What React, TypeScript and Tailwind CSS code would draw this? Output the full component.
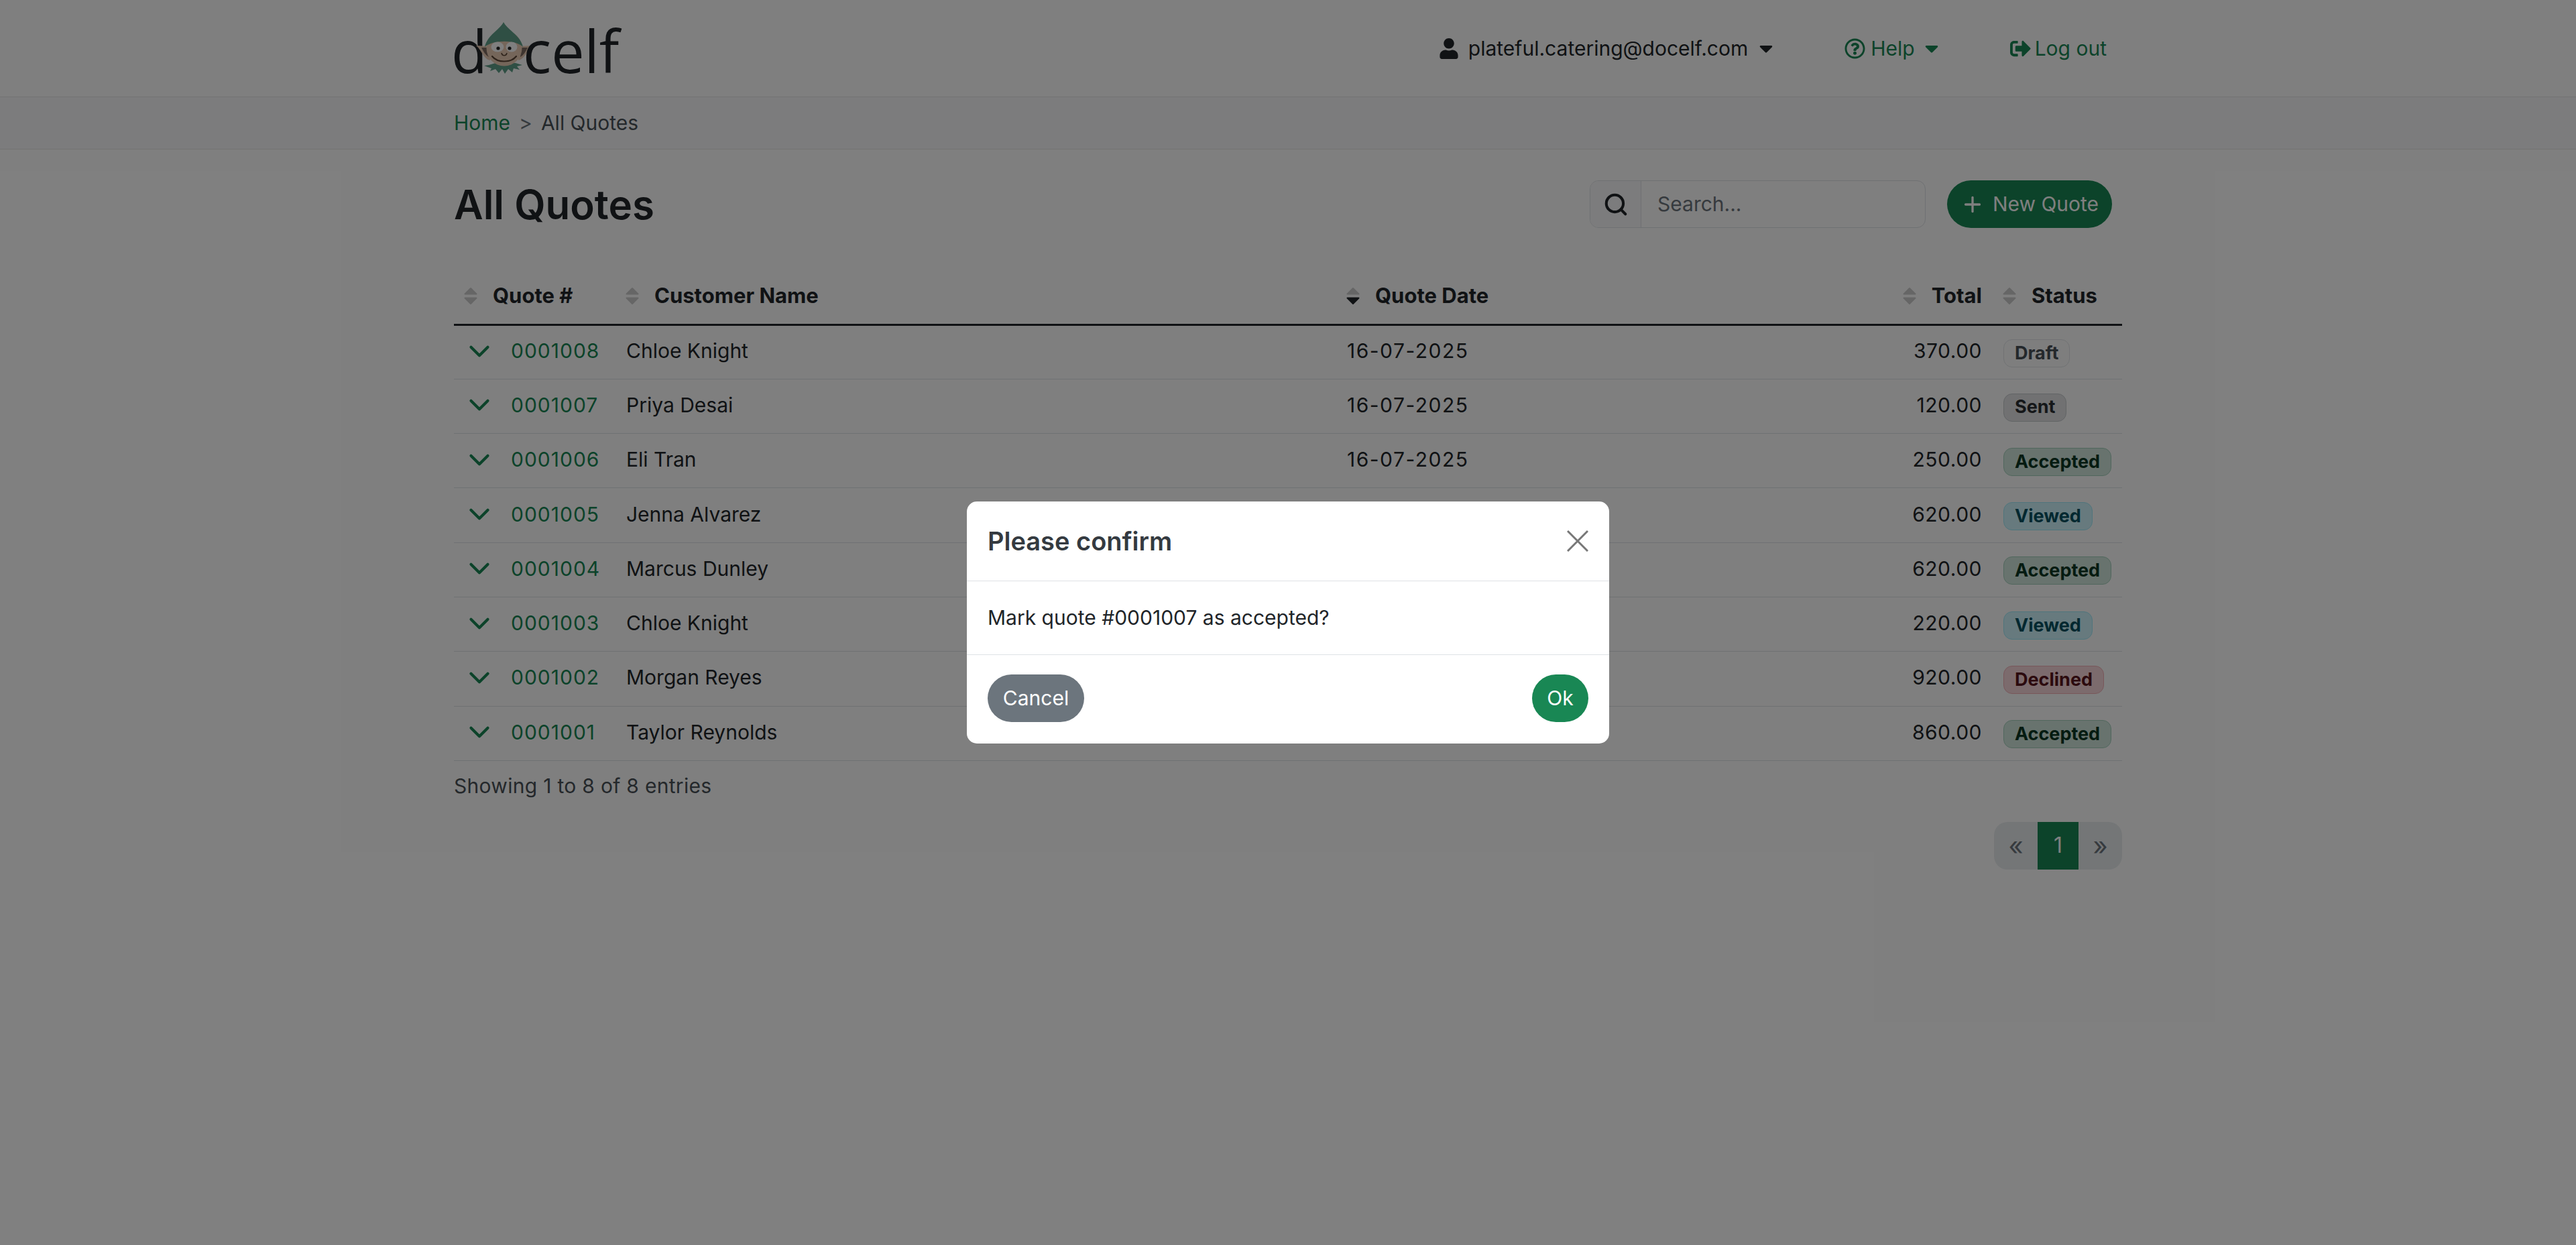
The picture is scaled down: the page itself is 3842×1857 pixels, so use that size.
import { ChevronDown, Plus, Search } from 'lucide-react'
import { FaCaretDown, FaRegQuestionCircle, FaSignOutAlt, FaUser } from 'react-icons/fa'

type Status = 'Draft' | 'Sent' | 'Accepted' | 'Viewed' | 'Declined'

const quotes: { id: string; name: string; total: string; status: Status }[] = [
  { id: '0001008', name: 'Chloe Knight', total: '370.00', status: 'Draft' },
  { id: '0001007', name: 'Priya Desai', total: '120.00', status: 'Sent' },
  { id: '0001006', name: 'Eli Tran', total: '250.00', status: 'Accepted' },
  { id: '0001005', name: 'Jenna Alvarez', total: '620.00', status: 'Viewed' },
  { id: '0001004', name: 'Marcus Dunley', total: '620.00', status: 'Accepted' },
  { id: '0001003', name: 'Chloe Knight', total: '220.00', status: 'Viewed' },
  { id: '0001002', name: 'Morgan Reyes', total: '920.00', status: 'Declined' },
  { id: '0001001', name: 'Taylor Reynolds', total: '860.00', status: 'Accepted' }
]

const statusTone: Record<Status, string> = {
  Draft: 'border-[#e2e5e8] bg-[#fcfcfd] text-[#495057]',
  Sent: 'border-[#c4c8cb] bg-[#e2e3e5] text-[#2b2f32]',
  Accepted: 'border-[#a3cfbb] bg-[#d1e7dd] text-[#0a3622]',
  Viewed: 'border-[#9eeaf9] bg-[#cff4fc] text-[#055160]',
  Declined: 'border-[#f1aeb5] bg-[#f8d7da] text-[#58151c]'
}

function ElfHead() {
  return (
    <svg viewBox="0 0 87 78" className="h-[78px] w-[87px] shrink-0" aria-hidden>
      <path d="M20 65 L13 66 L24 70 L22 74 L30 71 L35 77 L40 71 L44 78 L49 71 L55 76 L57 70 L66 72 L62 67 L70 65 L60 62 L30 62Z" fill="#5e9e88" />
      <path d="M1 36 L20 37 L22 58 C12 56 9 42 1 36Z" fill="#eaccb4" />
      <path d="M86 36 L66 37 L64 58 C74 56 78 42 86 36Z" fill="#eaccb4" />
      <path d="M9 39 L19 39 L20 53 C15 50 12 45 9 39Z" fill="#7c6a60" />
      <path d="M78 39 L68 39 L67 53 C72 50 75 45 78 39Z" fill="#7c6a60" />
      <circle cx="43" cy="40" r="26.5" fill="#eaccb4" />
      <path d="M42 1 C48 13 67 20 71 38 C60 27 26 27 14 38 C18 20 36 13 42 1Z" fill="#5e9e88" />
      <ellipse cx="33" cy="38" rx="9.5" ry="7.5" fill="#fff" />
      <ellipse cx="54" cy="38" rx="8.5" ry="7.5" fill="#fff" />
      <circle cx="34" cy="40" r="2.6" fill="#222" />
      <circle cx="51" cy="40" r="2.6" fill="#222" />
      <path d="M39 47 C40 52 46 52 47 47" fill="none" stroke="#5c4636" strokeWidth="1.6" />
      <path d="M25 52 C33 62 53 62 61 52" fill="none" stroke="#5c4636" strokeWidth="2.2" strokeLinecap="round" />
    </svg>
  )
}

function SortIcon({ active }: { active?: boolean }) {
  return (
    <svg viewBox="0 0 20 27" className="h-[27px] w-5 shrink-0" strokeLinejoin="round" strokeWidth="2" aria-hidden>
      <path d="M10 2 L18.5 10.5 L1.5 10.5Z" fill="#cccccc" stroke="#cccccc" />
      <path
        d="M10 25 L18.5 16.5 L1.5 16.5Z"
        fill={active ? '#212529' : '#cccccc'}
        stroke={active ? '#212529' : '#cccccc'}
      />
    </svg>
  )
}

function Header({ label, active, right }: { label: string; active?: boolean; right?: boolean }) {
  return (
    <div className={`flex items-center gap-[23px] ${right ? 'justify-end' : ''}`}>
      <SortIcon active={active} />
      <span className="text-[31px] font-bold">{label}</span>
    </div>
  )
}

export default function App() {
  return (
    <div className="relative min-h-[1857px] bg-white text-[30px] text-[#212529] [font-family:Inter,sans-serif]">
      <header className="h-[145px] border-b border-[#e6e6e6]">
        <div className="mx-auto flex h-full w-[2488px] items-start justify-between pr-[23px]">
          <a className="mt-[32px] flex h-[78px] items-start text-[#212529] [font-family:'Open_Sans',sans-serif]" aria-label="docelf">
            <span className="-ml-[4px] -mt-[17px] w-[36px] text-[88px] leading-[120px]">d</span>
            <ElfHead />
            <span className="-ml-[16px] -mt-[17px] text-[88px] leading-[120px]">celf</span>
          </a>
          <nav className="mt-[54px] flex items-center text-[30px] leading-[36px]">
            <FaUser className="h-[31px] w-[28px]" />
            <span className="ml-[15px]">plateful.catering@docelf.com</span>
            <FaCaretDown className="ml-[17px] h-[32px] w-[20px]" />
            <span className="ml-[107px] flex items-center text-[#198754]">
              <FaRegQuestionCircle className="h-[31px] w-[31px]" />
              <span className="ml-2">Help</span>
              <FaCaretDown className="ml-[15px] h-[32px] w-[20px]" />
            </span>
            <span className="ml-[107px] flex items-center text-[#198754]">
              <FaSignOutAlt className="h-[31px] w-[31px]" />
              <span className="ml-[6px]">Log out</span>
            </span>
          </nav>
        </div>
      </header>

      <div className="h-[78px] border-b border-[#e6e6e6] bg-[#f8f9fa]">
        <div className="mx-auto flex h-full w-[2488px] items-center text-[30px]">
          <a className="text-[#198754]">Home</a>
          <span className="mx-[13px] text-[#6c757d]">&gt;</span>
          <span className="text-[#495057]">All Quotes</span>
        </div>
      </div>

      <main className="mx-auto w-[2488px]">
        <div className="mt-[46px] flex h-[71px] items-center pr-[15px]">
          <h1 className="text-[60px] font-semibold leading-none">All Quotes</h1>
          <div className="ml-auto flex h-[71px] w-[501px] overflow-hidden rounded-[13px] border border-[#dee2e6]">
            <span className="flex w-[76px] items-center justify-center border-r border-[#dee2e6] bg-[#f8f9fa]">
              <Search className="h-[38px] w-[38px]" strokeWidth={2.6} />
            </span>
            <span className="flex items-center pl-6 text-[#6c757d]">Search...</span>
          </div>
          <button className="ml-[32px] flex h-[71px] w-[246px] items-center justify-center gap-[12px] rounded-full bg-[#198754] text-[30px] text-white">
            <Plus className="h-[36px] w-[36px]" strokeWidth={2.2} />
            New Quote
          </button>
        </div>

        <table className="mt-[60px] w-full table-fixed border-collapse">
          <colgroup>
            <col className="w-[241px]" />
            <col className="w-[1075px]" />
            <col className="w-[815px]" />
            <col className="w-[164px]" />
            <col className="w-[193px]" />
          </colgroup>
          <thead>
            <tr className="h-[84px] border-b-[3px] border-[#212529]">
              <th className="pl-[15px] text-left"><Header label="Quote #" /></th>
              <th className="pl-[15px] text-left"><Header label="Customer Name" /></th>
              <th className="pl-[15px] text-left"><Header label="Quote Date" active /></th>
              <th className="pr-4 text-right"><Header label="Total" right /></th>
              <th className="pl-[15px] text-left"><Header label="Status" /></th>
            </tr>
          </thead>
          <tbody>
            {quotes.map((quote) => (
              <tr key={quote.id} className="h-[81.3px] border-b border-[#dee2e6]">
                <td className="pb-[3px] pl-[13px]">
                  <div className="flex items-center text-[#198754]">
                    <ChevronDown className="h-[50px] w-[50px]" strokeWidth={2} />
                    <a className="ml-[22px] tracking-[1px]">{quote.id}</a>
                  </div>
                </td>
                <td className="pb-[3px] pl-4">{quote.name}</td>
                <td className="pb-[3px] pl-4 tracking-[1.5px]">16-07-2025</td>
                <td className="pb-[3px] pr-4 text-right tracking-[0.5px]">{quote.total}</td>
                <td className="pl-4">
                  <span className={`inline-flex h-[42px] items-center rounded-[13px] border px-4 text-[27px] font-bold ${statusTone[quote.status]}`}>
                    {quote.status}
                  </span>
                </td>
              </tr>
            ))}
          </tbody>
        </table>

        <p className="mt-[15px] tracking-[0.3px] text-[#495057]">Showing 1 to 8 of 8 entries</p>

        <div className="mt-[31px] flex justify-end">
          <div className="flex h-[71px] w-[191px] overflow-hidden rounded-[20px] bg-[#e9ecef] text-[#6c757d]">
            <span className="flex w-[65px] items-center justify-center text-[38px]">«</span>
            <span className="flex w-[61px] items-center justify-center bg-[#198754] text-[32px] text-white">1</span>
            <span className="flex w-[65px] items-center justify-center text-[38px]">»</span>
          </div>
        </div>
      </main>

      <div className="absolute inset-0 flex justify-center bg-black/50 pt-[748px]">
        <div className="h-[361px] w-[958px] overflow-hidden rounded-[15px] bg-white text-[#212529]">
          <div className="flex h-[119px] items-center justify-between border-b border-[#dee2e6] px-[31px]">
            <h2 className="text-[38px] font-semibold leading-none text-[#343a40]">Please confirm</h2>
            <svg viewBox="0 0 32 32" className="h-8 w-8" aria-hidden>
              <path d="M1 1 L31 31 M31 1 L1 31" stroke="#777" strokeWidth="3" />
            </svg>
          </div>
          <div className="flex h-[110px] items-center border-b border-[#dee2e6] px-[31px]">Mark quote #0001007 as accepted?</div>
          <div className="flex items-start justify-between px-[31px] pt-[29px]">
            <button className="flex h-[71px] w-[144px] items-center justify-center rounded-full bg-[#6c757d] text-white">Cancel</button>
            <button className="flex h-[71px] w-[84px] items-center justify-center rounded-full bg-[#198754] text-white">Ok</button>
          </div>
        </div>
      </div>
    </div>
  )
}
